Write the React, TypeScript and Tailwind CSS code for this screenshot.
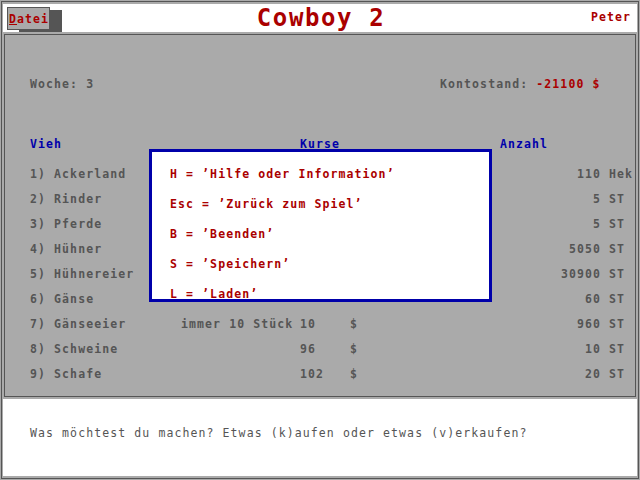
import React from "react"

const rows = [
  { name: "1) Ackerland", note: "", price: "", qty: "110", unit: "Hek" },
  { name: "2) Rinder", note: "", price: "", qty: "5", unit: "ST" },
  { name: "3) Pferde", note: "", price: "", qty: "5", unit: "ST" },
  { name: "4) Hühner", note: "", price: "", qty: "5050", unit: "ST" },
  { name: "5) Hühnereier", note: "", price: "", qty: "30900", unit: "ST" },
  { name: "6) Gänse", note: "", price: "", qty: "60", unit: "ST" },
  { name: "7) Gänseeier", note: "immer 10 Stück", price: "10", qty: "960", unit: "ST" },
  { name: "8) Schweine", note: "", price: "96", qty: "10", unit: "ST" },
  { name: "9) Schafe", note: "", price: "102", qty: "20", unit: "ST" },
]

const menu = [
  "H = ’Hilfe oder Information’",
  "Esc = ’Zurück zum Spiel’",
  "B = ’Beenden’",
  "S = ’Speichern’",
  "L = ’Laden’",
]

const Row = ({ name, note, price, qty, unit }) => (
  <div className="flex h-[25px] items-center whitespace-nowrap">
    <span className="w-[151px]">{name}</span>
    <span className="w-[119px]">{note}</span>
    <span className="w-[50px]">{price}</span>
    <span className="w-[10px]">{price ? "$" : ""}</span>
    <span className="w-[241px] text-right">{qty}</span>
    <span className="ml-[8px]">{unit}</span>
  </div>
)

export default function App() {
  return (
    <div className="w-[640px] h-[480px] bg-[#aaaaaa] p-px font-['DejaVu_Sans_Mono',monospace] text-[11.5px] tracking-[1.1px]">
      <div className="h-full border border-[#555555] flex flex-col gap-[2px] px-px py-[2px]">
        {/* title bar */}
        <header className="h-[28px] shrink-0 bg-white grid grid-cols-[1fr_auto_1fr] items-center overflow-hidden font-bold text-[#aa0000]">
          <div className="self-start ml-[4px] mt-[3px] w-[43px] h-[23px] bg-[#aaaaaa] border border-[#555555] shadow-[12px_3px_0_0_#555555] pl-[1px] flex items-center leading-[12px]">
            <span className="underline underline-offset-[1px]">D</span>atei
          </div>
          <div className="text-[24px] tracking-[1.6px] leading-[24px] pl-[2px]">Cowboy 2</div>
          <div className="justify-self-end pr-[6px]">Peter</div>
        </header>

        {/* main panel */}
        <main className="relative flex-1 mx-px border border-[#555555] pt-[41px] pl-[25px] font-bold text-[#555555] leading-[16px]">
          <div className="flex whitespace-nowrap">
            <span className="w-[410px]">Woche: 3</span>
            <span>
              Kontostand: <span className="text-[#aa0000]">-21100 $</span>
            </span>
          </div>

          <div className="flex mt-[44px] text-[#0000aa]">
            <span className="w-[270px]">Vieh</span>
            <span className="w-[200px]">Kurse</span>
            <span>Anzahl</span>
          </div>

          <div className="mt-[9px]">
            {rows.map(r => (
              <Row key={r.name} {...r} />
            ))}
          </div>

          {/* key help dialog */}
          <div className="absolute left-[144px] top-[114px] w-[343px] h-[153px] bg-white border-[3px] border-[#0000aa] pl-[18px] pt-[16px] flex flex-col gap-[18px] text-[#aa0000] leading-[12px]">
            {menu.map(m => (
              <div key={m} className="whitespace-nowrap">
                {m}
              </div>
            ))}
          </div>
        </main>

        {/* prompt */}
        <footer className="h-[77px] shrink-0 bg-white pl-[27px] pt-[26px] text-[#555555] leading-[16px] whitespace-nowrap">
          Was möchtest du machen? Etwas (k)aufen oder etwas (v)erkaufen?
        </footer>
      </div>
    </div>
  )
}
